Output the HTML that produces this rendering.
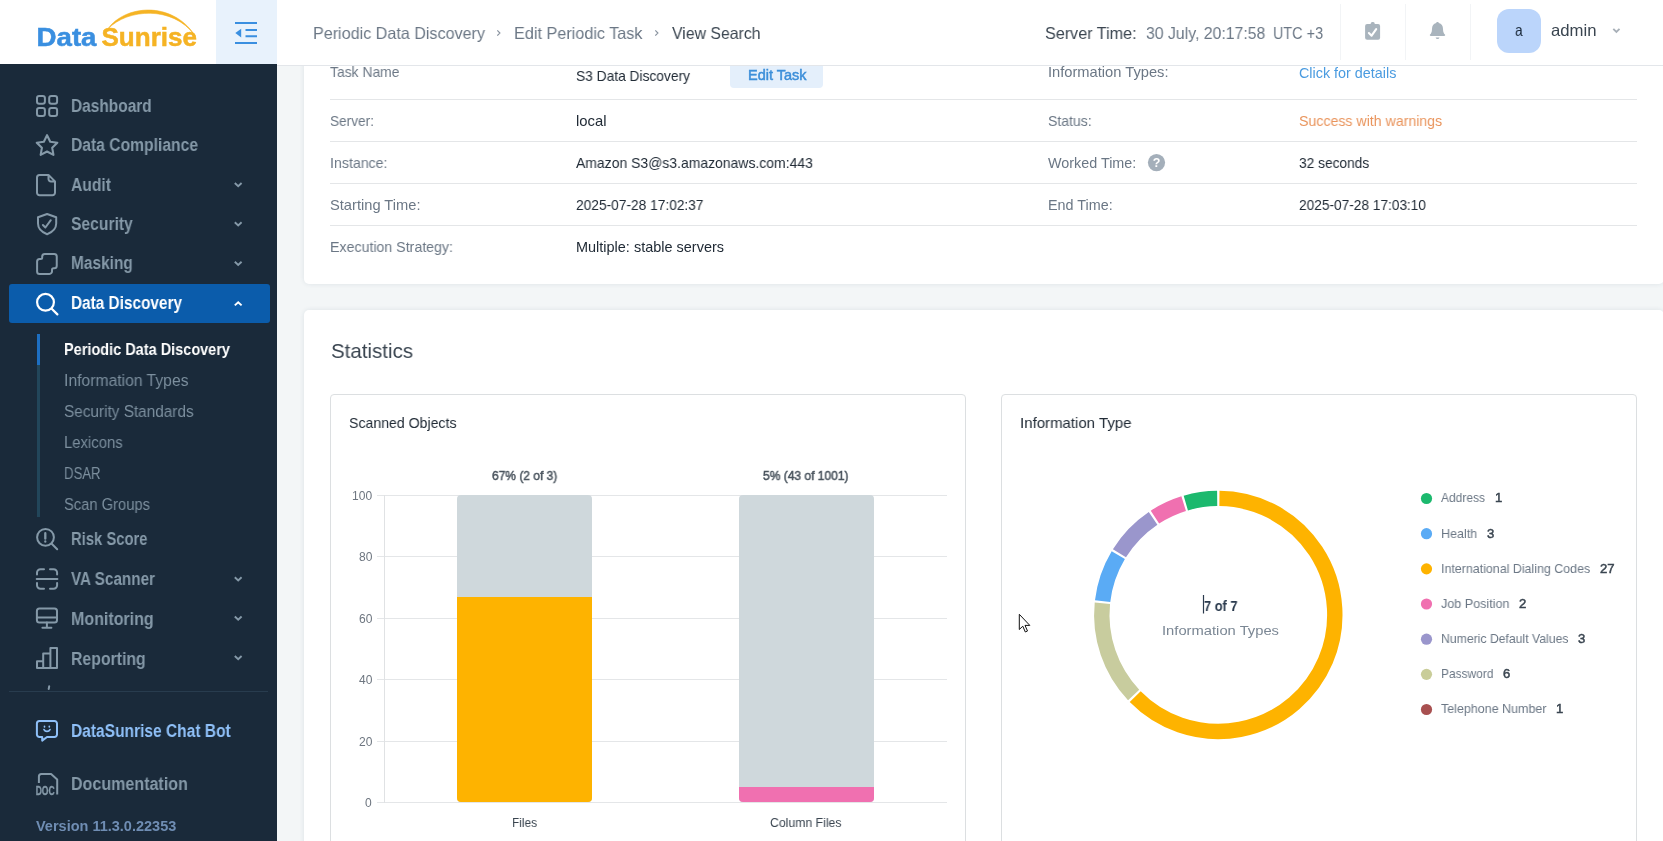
<!DOCTYPE html>
<html><head><meta charset="utf-8"><title>DataSunrise</title>
<style>
html,body{margin:0;padding:0}
body{width:1663px;height:841px;overflow:hidden;position:relative;background:#f3f6f7;font-family:"Liberation Sans",sans-serif}
.t{position:absolute;white-space:pre;will-change:transform}
.a{position:absolute}
#side{left:0;top:64px;width:277px;height:777px;background:#1a2a3a}
#logo{left:0;top:0;width:216px;height:64px;background:#fff}
#tog{left:216px;top:0;width:61px;height:64px;background:#e8f2fc}
#head{left:277px;top:0;width:1386px;height:65px;background:#fff;border-bottom:1px solid #e3e6ea}
#card1{left:304px;top:60px;width:1360px;height:224px;background:#fff;border-radius:5px;box-shadow:0 0 5px rgba(30,60,90,.10)}
#card2{left:304px;top:310px;width:1360px;height:560px;background:#fff;border-radius:5px;box-shadow:0 0 5px rgba(30,60,90,.10)}
.hl{position:absolute;left:330px;width:1307px;height:1px;background:#e4e6e8}
.ic{position:absolute;border:1px solid #dcdfe1;border-radius:4px;background:#fff}
.gl{position:absolute;left:376.5px;width:570.5px;height:1px;background:#e4e6e8}
svg{position:absolute;left:0;top:0;overflow:visible;will-change:transform}
</style></head><body>
<div id="card1" class="a"></div>
<div id="card2" class="a"></div>
<div class="hl" style="top:99px"></div><div class="hl" style="top:141px"></div><div class="hl" style="top:183px"></div><div class="hl" style="top:225px"></div>
<div class="a" style="left:730px;top:60px;width:93px;height:27.5px;background:#e4effb;border-radius:4px"></div>
<div class="ic" style="left:330px;top:394px;width:634px;height:470px"></div>
<div class="ic" style="left:1001px;top:394px;width:634px;height:470px"></div>
<!-- bar chart -->
<div class="gl" style="top:495px"></div><div class="gl" style="top:556.4px"></div><div class="gl" style="top:617.8px"></div><div class="gl" style="top:679.2px"></div><div class="gl" style="top:740.6px"></div><div class="gl" style="top:802px"></div>
<div class="a" style="left:384px;top:495px;width:1px;height:308px;background:#e0e2e4"></div>
<div class="a" style="left:457px;top:495px;width:135px;height:307px;background:#cfd8dc;border-radius:4px"></div>
<div class="a" style="left:457px;top:597px;width:135px;height:205px;background:#feb300;border-radius:0 0 4px 4px"></div>
<div class="a" style="left:739.25px;top:495px;width:134.5px;height:307px;background:#cfd8dc;border-radius:4px"></div>
<div class="a" style="left:739.25px;top:787px;width:134.5px;height:15px;background:#f070b0;border-radius:0 0 4px 4px"></div>
<!-- header + sidebar -->
<div id="head" class="a"></div>
<div id="logo" class="a"></div>
<div id="tog" class="a"></div>
<div id="side" class="a"></div>
<div class="a" style="left:9px;top:284px;width:261px;height:39px;background:#0b5cab;border-radius:3px"></div>
<div class="a" style="left:37px;top:334px;width:3px;height:183px;background:#22465a"></div>
<div class="a" style="left:37px;top:334px;width:3px;height:31px;background:#1d6fc2"></div>
<div class="a" style="left:9px;top:691px;width:259px;height:1px;background:#283c4e"></div>
<div class="a" style="left:1340px;top:4px;width:1px;height:56px;background:#f2f4f6"></div>
<div class="a" style="left:1405px;top:4px;width:1px;height:56px;background:#f2f4f6"></div>
<div class="a" style="left:1470px;top:4px;width:1px;height:56px;background:#f2f4f6"></div>
<div class="a" style="left:1497px;top:9px;width:43.7px;height:43.8px;background:#bbd5fb;border-radius:12px"></div>
<svg width="1663" height="841" viewBox="0 0 1663 841">
<path d="M1219.42 498.41A116.5 116.5 0 1 1 1135.21 696.56" stroke="#feb300" stroke-width="15.4" fill="none"/>
<path d="M1133.66 694.95A116.5 116.5 0 0 1 1102.38 603.27" stroke="#c8cc9e" stroke-width="15.4" fill="none"/>
<path d="M1102.63 601.05A116.5 116.5 0 0 1 1118.28 555.17" stroke="#5aabf5" stroke-width="15.4" fill="none"/>
<path d="M1119.44 553.26A116.5 116.5 0 0 1 1153.09 518.36" stroke="#9a96cc" stroke-width="15.4" fill="none"/>
<path d="M1154.95 517.13A116.5 116.5 0 0 1 1183.67 503.67" stroke="#f070b0" stroke-width="15.4" fill="none"/>
<path d="M1185.81 503.02A116.5 116.5 0 0 1 1217.18 498.41" stroke="#1cb96e" stroke-width="15.4" fill="none"/>
<circle cx="1426.5" cy="498.50" r="5.600" fill="#1cb96e"/><circle cx="1426.5" cy="533.67" r="5.600" fill="#5aabf5"/><circle cx="1426.5" cy="568.84" r="5.600" fill="#feb300"/><circle cx="1426.5" cy="604.01" r="5.600" fill="#f070b0"/><circle cx="1426.5" cy="639.18" r="5.600" fill="#9a96cc"/><circle cx="1426.5" cy="674.35" r="5.600" fill="#c9cd99"/><circle cx="1426.5" cy="709.52" r="5.600" fill="#a85050"/>
<!-- logo text + arc -->
<text x="36.5" y="46.2" font-family="Liberation Sans" font-weight="700" font-size="26" fill="#3a8fe0" stroke="#3a8fe0" stroke-width="0.5" textLength="60" lengthAdjust="spacingAndGlyphs">Data</text>
<text x="101.5" y="46.2" font-family="Liberation Sans" font-weight="700" font-size="26" fill="#f5b324" stroke="#f5b324" stroke-width="0.5" textLength="95.5" lengthAdjust="spacingAndGlyphs">Sunrise</text>
<path d="M108 28.800C125 4.800 172 .8 194.500 35C173 5.800 128 8.300 108 28.800Z" fill="#f5b324" stroke="#f5b324" stroke-width=".6" stroke-linejoin="round"/>
<!-- toggle -->
<g stroke="#3a8fe0" stroke-width="1.9" fill="none"><path d="M235 23H257M245.5 30H257M245.5 36.3H257M235 43H257"/></g>
<path d="M241.2 28.800V37.400L235.300 33.100Z" fill="#3a8fe0"/>
<!-- breadcrumb chevrons -->
<g stroke="#8a94a0" stroke-width="1.2" fill="none"><path d="M497.300 30.300L499.900 33L497.300 35.700M655.300 30.300L657.900 33L655.300 35.700"/></g>
<!-- header icons -->
<g fill="#a9b4bd"><rect x="1365.100" y="24" width="15" height="15.700" rx="2"/><rect x="1370.700" y="21.900" width="4" height="4" rx="1.600"/>
<path d="M1437.500 21.900c-.8 0-1.300.5-1.300 1.200-2.700.7-4.200 3-4.200 5.800 0 3.500-1.200 4.800-2 5.700-.5.600 0 1.400.8 1.400h13.400c.8 0 1.300-.8.8-1.400-.8-.9-2-2.200-2-5.700 0-2.800-1.500-5.100-4.200-5.800 0-.7-.5-1.200-1.300-1.200zM1435.600 37.500a2 2 0 0 0 3.900 0z"/></g>
<path d="M1368.900 33.100l2.700 2.600 4.600-6.500" stroke="#fff" stroke-width="2.100" fill="none" stroke-linecap="round" stroke-linejoin="round"/>
<path d="M1613.300 28.900l3.100 3 3.100-3" stroke="#a8b0b8" stroke-width="1.900" fill="none"/>
<!-- question mark -->
<circle cx="1156.500" cy="162.600" r="8.600" fill="#a4afba"/>
<text x="1156.500" y="167" text-anchor="middle" font-family="Liberation Sans" font-weight="700" font-size="12.5" fill="#fff">?</text>
<!-- sidebar icons -->
<g stroke="#8599a8" stroke-width="2" fill="none" stroke-linejoin="round" stroke-linecap="round">
 <!-- dashboard -->
 <rect x="37" y="95.900" width="7.900" height="7.900" rx="2.200"/><rect x="49.200" y="95.900" width="7.900" height="7.900" rx="2.200"/><rect x="37" y="108" width="7.900" height="7.900" rx="2.200"/><rect x="49.200" y="108" width="7.900" height="7.900" rx="2.200"/>
 <!-- star -->
 <path d="M47.050 135.200l3.200 6.500 7.100 1-5.150 5.050 1.250 7.100-6.400-3.400-6.400 3.400 1.250-7.100-5.150-5.050 7.100-1z" stroke-width="2.100"/>
 <!-- audit doc -->
 <path d="M39.500 174.900H48.500L55 181.400V192.700a2.500 2.500 0 0 1-2.500 2.500H39.500a2.500 2.500 0 0 1-2.500-2.500V177.400a2.500 2.500 0 0 1 2.500-2.500zM48.500 174.900V179a2.400 2.400 0 0 0 2.400 2.400H55"/>
 <!-- shield -->
 <path d="M47.100 214l9.100 3.300v6.200c0 5.300-3.900 8.700-9.100 10.700-5.200-2-9.100-5.400-9.100-10.700v-6.200zM42.900 225l2.500 2.500 5.400-7.300"/>
 <!-- masking -->
 <path d="M42.200 257.400v-.8a2.500 2.500 0 0 1 2.500-2.500h9.550a2.500 2.500 0 0 1 2.500 2.500v9.200a2.500 2.500 0 0 1-2.500 2.500h-.75a1.500 1.500 0 0 0-1.500 1.500v1.600a2.500 2.500 0 0 1-2.500 2.500h-9.900a2.500 2.500 0 0 1-2.500-2.500v-10a2.500 2.500 0 0 1 2.500-2.500h1.100a1.500 1.500 0 0 0 1.500-1.500z"/>
 <!-- risk score -->
 <circle cx="45.500" cy="537.300" r="8.400"/><path d="M51.700 543.700l5.500 5.500"/>
 <path d="M45.300 533.200v5.500M45.300 541.500v.2" stroke-width="2.300"/>
 <!-- VA scanner -->
 <path d="M37 574.500v-1.800a3.500 3.500 0 0 1 3.500-3.500h3.500M50 569.200h3.600a3.500 3.500 0 0 1 3.500 3.500v1.800M57.100 583v2.300a3.500 3.500 0 0 1-3.500 3.500h-3.600M44 588.800h-3.500a3.500 3.500 0 0 1-3.500-3.500v-2.300M36.700 579h20.700"/>
 <!-- monitoring -->
 <rect x="36.900" y="608.400" width="20.100" height="14" rx="2.500"/><path d="M37 617.500h20M46.900 622.500v5M42.400 627.800h9"/>
 <!-- reporting -->
 <path d="M37 661.300h6.200v6.600h-6.200zM43.200 653.600h7.200v14.300h-7.200zM50.400 648.100h6.600v19.800h-6.600z"/>
 <!-- next clipped icon hint -->
 <path d="M49.200 686.300l-.5 2.700"/>
 <!-- doc icon -->
 <path d="M38.900 783v-6.500a2.500 2.500 0 0 1 2.500-2.500h9.700l6.100 5.500v15.100" stroke-linecap="butt"/>
</g>
<text x="35.700" y="794.900" font-family="Liberation Sans" font-weight="700" font-size="12.700" fill="#8599a8" stroke="#8599a8" stroke-width="0.35" textLength="19" lengthAdjust="spacingAndGlyphs">DOC</text>
<!-- data discovery (white) -->
<g stroke="#fff" stroke-width="2.200" fill="none" stroke-linecap="round"><circle cx="45.500" cy="302.300" r="8.400"/><path d="M51.700 308.700l5.700 5.700"/></g>
<!-- chat bot -->
<g stroke="#8fc0f8" stroke-width="2" fill="none" stroke-linejoin="round" stroke-linecap="round"><path d="M39.400 721h15.100a2.500 2.500 0 0 1 2.500 2.500v11a2.500 2.500 0 0 1-2.500 2.500h-7.500l-4.800 3.600v-3.600h-2.800a2.500 2.500 0 0 1-2.500-2.500v-11a2.500 2.500 0 0 1 2.500-2.500z"/><path d="M44 729.600c1.300 2.400 4.700 2.400 6 0M44.500 726.400v.4M49.300 726.400v.4" stroke-width="1.700"/></g>
<!-- chevrons -->
<g stroke="#8599a8" stroke-width="1.900" fill="none"><path d="M234.800 183l3.400 3.200 3.400-3.200M234.800 222.300l3.400 3.200 3.400-3.200M234.800 261.700l3.400 3.200 3.400-3.200M234.800 577.200l3.400 3.200 3.400-3.200M234.800 616.500l3.400 3.200 3.400-3.200M234.800 656l3.400 3.200 3.400-3.200"/></g>
<path d="M234.800 305.400l3.400-3.200 3.400 3.200" stroke="#fff" stroke-width="1.900" fill="none"/>
<!-- text caret + mouse cursor -->
<path d="M1203.500 595v18.500" stroke="#2a3a4d" stroke-width="1.200"/>
<path d="M1019.300 614.300v15.200l3.500-3.300 2.500 5.800 2.200-1-2.500-5.600h4.800z" fill="#fff" stroke="#111" stroke-width="1" stroke-linejoin="round"/>

</svg>
<div class="t" style="top:25.03px;font-size:17.12px;line-height:17.12px;color:#6b7785;left:313.00px;transform:scaleX(0.9421);transform-origin:0 0;">Periodic Data Discovery</div>
<div class="t" style="top:25.03px;font-size:17.12px;line-height:17.12px;color:#6b7785;left:514.00px;transform:scaleX(0.9471);transform-origin:0 0;">Edit Periodic Task</div>
<div class="t" style="top:25.03px;font-size:17.12px;line-height:17.12px;color:#3a4550;left:671.70px;transform:scaleX(0.9243);transform-origin:0 0;">View Search</div>
<div class="t" style="top:24.53px;font-size:17.12px;line-height:17.12px;color:#3a4550;left:1044.50px;transform:scaleX(0.9435);transform-origin:0 0;">Server Time:</div>
<div class="t" style="top:24.53px;font-size:17.12px;line-height:17.12px;color:#6b7785;left:1145.70px;transform:scaleX(0.9245);transform-origin:0 0;">30 July, 20:17:58</div>
<div class="t" style="top:24.53px;font-size:17.12px;line-height:17.12px;color:#6b7785;left:1273.00px;transform:scaleX(0.8412);transform-origin:0 0;">UTC +3</div>
<div class="t" style="top:21.85px;font-size:16.27px;line-height:16.27px;color:#1b2a3b;left:1515.20px;transform:scaleX(0.8401);transform-origin:0 0;">a</div>
<div class="t" style="top:21.97px;font-size:16.48px;line-height:16.48px;color:#3a4550;left:1550.75px;transform:scaleX(1.0143);transform-origin:0 0;">admin</div>
<div class="t" style="top:98.27px;font-size:17.43px;line-height:17.43px;color:#8599a8;font-weight:700;left:71.30px;transform:scaleX(0.8868);transform-origin:0 0;">Dashboard</div>
<div class="t" style="top:136.57px;font-size:17.43px;line-height:17.43px;color:#8599a8;font-weight:700;left:71.30px;transform:scaleX(0.8984);transform-origin:0 0;">Data Compliance</div>
<div class="t" style="top:176.87px;font-size:17.43px;line-height:17.43px;color:#8599a8;font-weight:700;left:70.70px;transform:scaleX(0.8986);transform-origin:0 0;">Audit</div>
<div class="t" style="top:216.17px;font-size:17.43px;line-height:17.43px;color:#8599a8;font-weight:700;left:71.20px;transform:scaleX(0.8987);transform-origin:0 0;">Security</div>
<div class="t" style="top:254.57px;font-size:17.43px;line-height:17.43px;color:#8599a8;font-weight:700;left:71.20px;transform:scaleX(0.8864);transform-origin:0 0;">Masking</div>
<div class="t" style="top:531.47px;font-size:17.43px;line-height:17.43px;color:#8599a8;font-weight:700;left:71.20px;transform:scaleX(0.8494);transform-origin:0 0;">Risk Score</div>
<div class="t" style="top:571.27px;font-size:17.43px;line-height:17.43px;color:#8599a8;font-weight:700;left:70.50px;transform:scaleX(0.8763);transform-origin:0 0;">VA Scanner</div>
<div class="t" style="top:611.47px;font-size:17.43px;line-height:17.43px;color:#8599a8;font-weight:700;left:71.00px;transform:scaleX(0.9189);transform-origin:0 0;">Monitoring</div>
<div class="t" style="top:650.87px;font-size:17.43px;line-height:17.43px;color:#8599a8;font-weight:700;left:71.00px;transform:scaleX(0.9080);transform-origin:0 0;">Reporting</div>
<div class="t" style="top:776.27px;font-size:17.43px;line-height:17.43px;color:#8599a8;font-weight:700;left:70.70px;transform:scaleX(0.9212);transform-origin:0 0;">Documentation</div>
<div class="t" style="top:294.77px;font-size:17.43px;line-height:17.43px;color:#ffffff;font-weight:700;left:71.20px;transform:scaleX(0.8816);transform-origin:0 0;">Data Discovery</div>
<div class="t" style="top:723.47px;font-size:17.43px;line-height:17.43px;color:#8fc0f8;font-weight:700;left:70.70px;transform:scaleX(0.8917);transform-origin:0 0;">DataSunrise Chat Bot</div>
<div class="t" style="top:342.41px;font-size:15.85px;line-height:15.85px;color:#ffffff;font-weight:700;left:64.40px;transform:scaleX(0.9150);transform-origin:0 0;">Periodic Data Discovery</div>
<div class="t" style="top:373.41px;font-size:15.85px;line-height:15.85px;color:#7c8f9e;left:64.40px;transform:scaleX(0.9908);transform-origin:0 0;">Information Types</div>
<div class="t" style="top:404.41px;font-size:15.85px;line-height:15.85px;color:#7c8f9e;left:64.40px;transform:scaleX(0.9681);transform-origin:0 0;">Security Standards</div>
<div class="t" style="top:435.41px;font-size:15.85px;line-height:15.85px;color:#7c8f9e;left:64.40px;transform:scaleX(0.9401);transform-origin:0 0;">Lexicons</div>
<div class="t" style="top:466.41px;font-size:15.85px;line-height:15.85px;color:#7c8f9e;left:64.40px;transform:scaleX(0.8312);transform-origin:0 0;">DSAR</div>
<div class="t" style="top:497.41px;font-size:15.85px;line-height:15.85px;color:#7c8f9e;left:64.40px;transform:scaleX(0.9299);transform-origin:0 0;">Scan Groups</div>
<div class="t" style="top:818.66px;font-size:14.37px;line-height:14.37px;color:#6f8db3;font-weight:700;left:36.40px;transform:scaleX(1.0099);transform-origin:0 0;">Version 11.3.0.22353</div>
<div class="t" style="top:64.86px;font-size:14.37px;line-height:14.37px;color:#6b7785;left:329.90px;transform:scaleX(0.9676);transform-origin:0 0;">Task Name</div>
<div class="t" style="top:68.86px;font-size:14.37px;line-height:14.37px;color:#212b36;left:576.40px;transform:scaleX(0.9586);transform-origin:0 0;">S3 Data Discovery</div>
<div class="t" style="top:67.77px;font-size:14.47px;line-height:14.47px;color:#3d8fd9;-webkit-text-stroke:0.5px #3d8fd9;left:748.00px;transform:scaleX(0.9922);transform-origin:0 0;">Edit Task</div>
<div class="t" style="top:64.61px;font-size:14.37px;line-height:14.37px;color:#6b7785;left:1048.25px;transform:scaleX(1.0223);transform-origin:0 0;">Information Types:</div>
<div class="t" style="top:66.06px;font-size:14.37px;line-height:14.37px;color:#4a9be0;left:1299.25px;">Click for details</div>
<div class="t" style="top:113.61px;font-size:14.37px;line-height:14.37px;color:#6b7785;left:329.90px;transform:scaleX(0.9504);transform-origin:0 0;">Server:</div>
<div class="t" style="top:113.61px;font-size:14.37px;line-height:14.37px;color:#212b36;left:576.40px;transform:scaleX(1.0323);transform-origin:0 0;">local</div>
<div class="t" style="top:113.61px;font-size:14.37px;line-height:14.37px;color:#6b7785;left:1048.25px;transform:scaleX(0.9776);transform-origin:0 0;">Status:</div>
<div class="t" style="top:113.61px;font-size:14.37px;line-height:14.37px;color:#e9945c;left:1299.25px;transform:scaleX(0.9859);transform-origin:0 0;">Success with warnings</div>
<div class="t" style="top:155.61px;font-size:14.37px;line-height:14.37px;color:#6b7785;left:329.90px;transform:scaleX(0.9866);transform-origin:0 0;">Instance:</div>
<div class="t" style="top:155.61px;font-size:14.37px;line-height:14.37px;color:#212b36;left:576.40px;transform:scaleX(0.9719);transform-origin:0 0;">Amazon S3@s3.amazonaws.com:443</div>
<div class="t" style="top:155.61px;font-size:14.37px;line-height:14.37px;color:#6b7785;left:1048.25px;">Worked Time:</div>
<div class="t" style="top:155.61px;font-size:14.37px;line-height:14.37px;color:#212b36;left:1299.25px;transform:scaleX(0.9557);transform-origin:0 0;">32 seconds</div>
<div class="t" style="top:197.61px;font-size:14.37px;line-height:14.37px;color:#6b7785;left:329.90px;transform:scaleX(1.0215);transform-origin:0 0;">Starting Time:</div>
<div class="t" style="top:197.61px;font-size:14.37px;line-height:14.37px;color:#212b36;left:576.40px;transform:scaleX(0.9562);transform-origin:0 0;">2025-07-28 17:02:37</div>
<div class="t" style="top:197.61px;font-size:14.37px;line-height:14.37px;color:#6b7785;left:1048.25px;transform:scaleX(0.9929);transform-origin:0 0;">End Time:</div>
<div class="t" style="top:197.61px;font-size:14.37px;line-height:14.37px;color:#212b36;left:1299.25px;transform:scaleX(0.9524);transform-origin:0 0;">2025-07-28 17:03:10</div>
<div class="t" style="top:239.61px;font-size:14.37px;line-height:14.37px;color:#6b7785;left:329.90px;transform:scaleX(0.9877);transform-origin:0 0;">Execution Strategy:</div>
<div class="t" style="top:239.61px;font-size:14.37px;line-height:14.37px;color:#212b36;left:576.40px;transform:scaleX(1.0079);transform-origin:0 0;">Multiple: stable servers</div>
<div class="t" style="top:340.15px;font-size:21.13px;line-height:21.13px;color:#3a4550;left:330.50px;transform:scaleX(0.9701);transform-origin:0 0;">Statistics</div>
<div class="t" style="top:415.15px;font-size:15.21px;line-height:15.21px;color:#212b36;left:348.75px;transform:scaleX(0.9283);transform-origin:0 0;">Scanned Objects</div>
<div class="t" style="top:415.15px;font-size:15.21px;line-height:15.21px;color:#212b36;left:1019.50px;transform:scaleX(0.9870);transform-origin:0 0;">Information Type</div>
<div class="t" style="top:469.96px;font-size:12.47px;line-height:12.47px;color:#4a545e;-webkit-text-stroke:0.5px #4a545e;left:491.75px;transform:scaleX(0.9607);transform-origin:0 0;">67% (2 of 3)</div>
<div class="t" style="top:469.96px;font-size:12.47px;line-height:12.47px;color:#4a545e;-webkit-text-stroke:0.5px #4a545e;left:763.25px;transform:scaleX(0.9635);transform-origin:0 0;">5% (43 of 1001)</div>
<div class="t" style="top:489.83px;font-size:12.04px;line-height:12.04px;color:#6e7680;right:1291.00px;">100</div>
<div class="t" style="top:551.23px;font-size:12.04px;line-height:12.04px;color:#6e7680;right:1291.00px;">80</div>
<div class="t" style="top:612.63px;font-size:12.04px;line-height:12.04px;color:#6e7680;right:1291.00px;">60</div>
<div class="t" style="top:674.03px;font-size:12.04px;line-height:12.04px;color:#6e7680;right:1291.00px;">40</div>
<div class="t" style="top:736.43px;font-size:12.04px;line-height:12.04px;color:#6e7680;right:1291.00px;">20</div>
<div class="t" style="top:796.83px;font-size:12.04px;line-height:12.04px;color:#6e7680;right:1291.00px;">0</div>
<div class="t" style="top:816.02px;font-size:12.99px;line-height:12.99px;color:#3a4550;left:512.00px;transform:scaleX(0.9117);transform-origin:0 0;">Files</div>
<div class="t" style="top:816.02px;font-size:12.99px;line-height:12.99px;color:#3a4550;left:770.00px;transform:scaleX(0.9437);transform-origin:0 0;">Column Files</div>
<div class="t" style="top:599.48px;font-size:14.58px;line-height:14.58px;color:#2a3a4d;font-weight:700;left:1204.00px;transform:scaleX(0.8798);transform-origin:0 0;">7 of 7</div>
<div class="t" style="top:624.38px;font-size:13.63px;line-height:13.63px;color:#7b8794;left:1162.00px;transform:scaleX(1.0827);transform-origin:0 0;">Information Types</div>
<div class="t" style="top:491.33px;font-size:13.1px;line-height:13.1px;color:#6b7785;left:1441.10px;transform:scaleX(0.9158);transform-origin:0 0;">Address</div>
<div class="t" style="top:491.33px;font-size:13.1px;line-height:13.1px;color:#3a4550;-webkit-text-stroke:0.5px #3a4550;left:1494.60px;">1</div>
<div class="t" style="top:526.50px;font-size:13.1px;line-height:13.1px;color:#6b7785;left:1441.10px;transform:scaleX(0.9562);transform-origin:0 0;">Health</div>
<div class="t" style="top:526.50px;font-size:13.1px;line-height:13.1px;color:#3a4550;-webkit-text-stroke:0.5px #3a4550;left:1486.80px;">3</div>
<div class="t" style="top:561.67px;font-size:13.1px;line-height:13.1px;color:#6b7785;left:1441.10px;transform:scaleX(0.9489);transform-origin:0 0;">International Dialing Codes</div>
<div class="t" style="top:561.67px;font-size:13.1px;line-height:13.1px;color:#3a4550;-webkit-text-stroke:0.5px #3a4550;left:1599.80px;">27</div>
<div class="t" style="top:596.84px;font-size:13.1px;line-height:13.1px;color:#6b7785;left:1441.10px;transform:scaleX(0.9601);transform-origin:0 0;">Job Position</div>
<div class="t" style="top:596.84px;font-size:13.1px;line-height:13.1px;color:#3a4550;-webkit-text-stroke:0.5px #3a4550;left:1519.10px;">2</div>
<div class="t" style="top:632.01px;font-size:13.1px;line-height:13.1px;color:#6b7785;left:1441.10px;transform:scaleX(0.9335);transform-origin:0 0;">Numeric Default Values</div>
<div class="t" style="top:632.01px;font-size:13.1px;line-height:13.1px;color:#3a4550;-webkit-text-stroke:0.5px #3a4550;left:1578.10px;">3</div>
<div class="t" style="top:667.18px;font-size:13.1px;line-height:13.1px;color:#6b7785;left:1441.10px;transform:scaleX(0.9130);transform-origin:0 0;">Password</div>
<div class="t" style="top:667.18px;font-size:13.1px;line-height:13.1px;color:#3a4550;-webkit-text-stroke:0.5px #3a4550;left:1503.10px;">6</div>
<div class="t" style="top:702.35px;font-size:13.1px;line-height:13.1px;color:#6b7785;left:1441.10px;transform:scaleX(0.9535);transform-origin:0 0;">Telephone Number</div>
<div class="t" style="top:702.35px;font-size:13.1px;line-height:13.1px;color:#3a4550;-webkit-text-stroke:0.5px #3a4550;left:1556.10px;">1</div>
</body></html>
